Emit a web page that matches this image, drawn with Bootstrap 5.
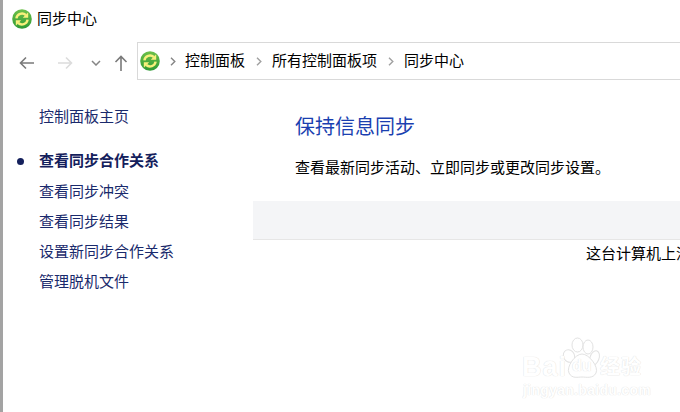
<!DOCTYPE html>
<html lang="zh-CN">
<head>
  <meta charset="UTF-8">
  <title>同步中心</title>
  <meta name="viewport" content="width=device-width, initial-scale=1.0">
  <link href="https://cdn.jsdelivr.net/npm/bootstrap@5.3.0/dist/css/bootstrap.min.css" rel="stylesheet">
  <style>
    html, body { height: 100%; overflow: hidden; }
    body {
      background: #fff;
      color: #000;
      font-family: "Liberation Sans", "Noto Sans CJK SC", sans-serif;
      font-size: 15px;
      line-height: 20px;
    }
    .win-frame { width: 680px; height: 412px; border-left: 3px solid #a3a3a3; position: relative; overflow: hidden; }
    .title-row { height: 38px; padding-left: 9px; gap: 5px; }
    .nav-row { height: 44px; padding-top: 4px; }
    .nav-btns { width: 134px; flex: none; }
    .nav-btns svg { position: relative; top: 1px; }
    .btn-back { margin-left: 16px; }
    .btn-fwd { margin-left: 24px; }
    .btn-down { margin-left: 18px; }
    .btn-up { margin-left: 13px; }
    .addr-box { height: 38px; flex: 1; border: 1px solid #d9d9d9; border-right: 0; padding-left: 2px; }
    .addr-sep { margin-left: 11px; margin-right: 10px; }
    .addr-sep.sep-first { margin-left: 10px; margin-right: 9px; }
    .side-col { width: 250px; flex: none; padding-top: 20px; }
    .side-link { display: block; color: #1a2a6c; text-decoration: none; padding-left: 36px; height: 30px; line-height: 30px; position: relative; }
    .side-link.first-link { margin-bottom: 14px; }
    .side-link.on { font-weight: 700; color: #14205c; height: 31px; }
    .side-link.on::before { content: ""; position: absolute; left: 14px; top: 12px; width: 7px; height: 7px; border-radius: 50%; background: #14205c; }
    .main-col { flex: 1; min-width: 0; padding-top: 32px; }
    .page-head { font-size: 20px; line-height: 26px; color: #1a3fb0; font-weight: 400; margin: 0 0 18px 42px; }
    .page-sub { margin: 0 0 23px 42px; }
    .gray-band { height: 39px; background: #f4f5f7; border-bottom: 1px solid #e6e6e6; }
    .empty-msg { padding: 4px 0 0 333px; white-space: nowrap; }
    .wm { position: absolute; left: 516px; top: 337px; width: 150px; height: 70px; color: #fff; pointer-events: none; text-shadow: 0 0 1px #e2e2e2, 0 0 1px #e2e2e2; }
    .wm-bai { position: absolute; left: 3px; top: 15px; font-size: 27px; line-height: 30px; font-weight: 700; letter-spacing: 1px; }
    .wm-du { position: absolute; left: 53px; top: 20px; font-size: 16px; line-height: 18px; font-weight: 700; }
    .wm-cn { position: absolute; left: 81px; top: 17px; font-size: 20px; line-height: 26px; font-weight: 700; letter-spacing: 1px; }
    .wm-url { position: absolute; left: 4px; top: 45px; font-size: 14px; line-height: 16px; font-weight: 700; letter-spacing: .3px; }
    .wm svg { position: absolute; left: 41px; top: -2px; }
  </style>
</head>
<body>
  <svg width="0" height="0" class="d-block">
    <defs>
      <linearGradient id="syncGreen" x1="0" y1="0" x2="0" y2="1">
        <stop offset="0" stop-color="#6cc04a"/>
        <stop offset="1" stop-color="#2f9a35"/>
      </linearGradient>
      <symbol id="syncIcon" viewBox="0 0 20 20">
        <circle cx="10" cy="10" r="9.8" fill="url(#syncGreen)"/>
        <path d="M4.4 9.4A5.7 5.7 0 0 1 13.8 6" fill="none" stroke="#f8f07c" stroke-width="2.4"/>
        <path d="M16.2 3.2V8.8H10.8Z" fill="#f8f07c"/>
        <path d="M15.6 10.6A5.7 5.7 0 0 1 6.2 14" fill="none" stroke="#f8f07c" stroke-width="2.4"/>
        <path d="M3.8 16.8V11.2H9.2Z" fill="#f8f07c"/>
      </symbol>
    </defs>
  </svg>

  <div class="win-frame d-flex flex-column">
    <!-- barra de titulo -->
    <div class="title-row d-flex align-items-center">
      <svg width="20" height="20"><use href="#syncIcon"/></svg>
      <span>同步中心</span>
    </div>

    <!-- navegacion -->
    <div class="nav-row d-flex">
      <div class="nav-btns d-flex align-items-center">
        <svg class="btn-back" width="15" height="14" viewBox="0 0 15 14"><path d="M15 7H1.2M7 1.5 1.5 7 7 12.5" fill="none" stroke="#7a7a7a" stroke-width="1.6"/></svg>
        <svg class="btn-fwd" width="15" height="14" viewBox="0 0 15 14"><path d="M0 7H13.8M8 1.5 13.5 7 8 12.5" fill="none" stroke="#dcdcdc" stroke-width="1.6"/></svg>
        <svg class="btn-down" width="10" height="6" viewBox="0 0 10 6"><path d="M1 1 5 5 9 1" fill="none" stroke="#858585" stroke-width="1.5"/></svg>
        <svg class="btn-up" width="14" height="16" viewBox="0 0 14 16"><path d="M7 16V1.5M1.5 7 7 1.5 12.5 7" fill="none" stroke="#7a7a7a" stroke-width="1.6"/></svg>
      </div>
      <div class="addr-box d-flex align-items-center">
        <svg width="20" height="20"><use href="#syncIcon"/></svg>
        <svg class="addr-sep sep-first" width="6" height="9" viewBox="0 0 6 9"><path d="M1 .8 4.8 4.5 1 8.2" fill="none" stroke="#858585" stroke-width="1.4"/></svg>
        <span>控制面板</span>
        <svg class="addr-sep" width="6" height="9" viewBox="0 0 6 9"><path d="M1 .8 4.8 4.5 1 8.2" fill="none" stroke="#a0a0a0" stroke-width="1.4"/></svg>
        <span>所有控制面板项</span>
        <svg class="addr-sep" width="6" height="9" viewBox="0 0 6 9"><path d="M1 .8 4.8 4.5 1 8.2" fill="none" stroke="#a0a0a0" stroke-width="1.4"/></svg>
        <span>同步中心</span>
      </div>
    </div>

    <div class="d-flex flex-grow-1">
      <div class="side-col">
        <a class="side-link first-link" href="#">控制面板主页</a>
        <a class="side-link on" href="#">查看同步合作关系</a>
        <a class="side-link" href="#">查看同步冲突</a>
        <a class="side-link" href="#">查看同步结果</a>
        <a class="side-link" href="#">设置新同步合作关系</a>
        <a class="side-link" href="#">管理脱机文件</a>
      </div>
      <div class="main-col">
        <h1 class="page-head">保持信息同步</h1>
        <p class="page-sub">查看最新同步活动、立即同步或更改同步设置。</p>
        <div class="gray-band"></div>
        <div class="empty-msg">这台计算机上没有同步合作关系</div>
      </div>
    </div>

    <!-- marca de agua -->
    <div class="wm">
      <svg width="44" height="46" viewBox="0 0 44 46" fill="#fff" stroke="#e2e2e2" stroke-width="1">
        <ellipse cx="9" cy="21" rx="5.5" ry="6.5" transform="rotate(-25 9 21)"/>
        <ellipse cx="17.5" cy="10" rx="5.5" ry="7"/>
        <ellipse cx="28" cy="12" rx="5" ry="7"/>
        <ellipse cx="34.5" cy="23" rx="4.5" ry="7.5" transform="rotate(20 34.5 23)"/>
        <path d="M22 19C15 19 6 32 9 38 12 44 18 42 22 42 26 42 33 44 36 38 39 32 29 19 22 19Z"/>
      </svg>
      <span class="wm-bai">Bai</span>
      <span class="wm-du">du</span>
      <span class="wm-cn">经验</span>
      <span class="wm-url">jingyan.baidu.com</span>
    </div>
  </div>
  <script src="https://cdn.jsdelivr.net/npm/bootstrap@5.3.0/dist/js/bootstrap.bundle.min.js"></script>
</body>
</html>
